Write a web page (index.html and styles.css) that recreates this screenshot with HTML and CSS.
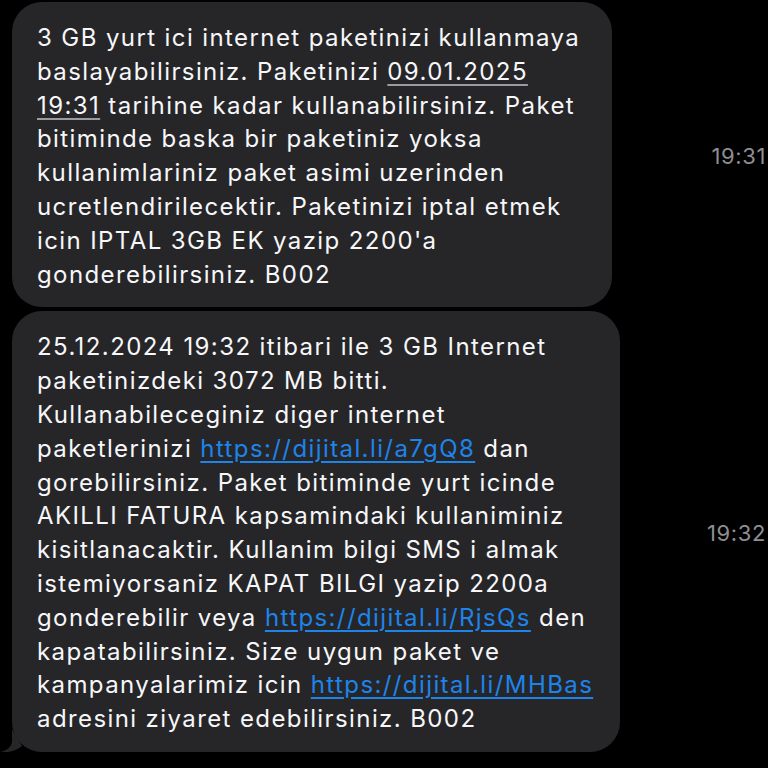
FILE: index.html
```html
<!DOCTYPE html>
<html lang="tr">
<head>
    <meta charset="UTF-8">
    <meta name="viewport" content="width=device-width, initial-scale=1.0">
    <title>Mesajlar</title>
    <link rel="stylesheet" href="styles.css">
</head>
<body>
    <div class="thread">
        <div class="msg">
            <div class="bubble bubble-first">
                3 GB yurt ici internet paketinizi kullanmaya<br>
                baslayabilirsiniz. Paketinizi <span class="date">09.01.2025</span><br>
                <span class="date">19:31</span> tarihine kadar kullanabilirsiniz. Paket<br>
                bitiminde baska bir paketiniz yoksa<br>
                kullanimlariniz paket asimi uzerinden<br>
                ucretlendirilecektir. Paketinizi iptal etmek<br>
                icin IPTAL 3GB EK yazip 2200'a<br>
                gonderebilirsiniz. B002
            </div>
            <span class="time">19:31</span>
        </div>

        <div class="msg">
            <div class="bubble bubble-last">
                25.12.2024 19:32 itibari ile 3 GB Internet<br>
                paketinizdeki 3072 MB bitti.<br>
                Kullanabileceginiz diger internet<br>
                paketlerinizi <a href="#">https://dijital.li/a7gQ8</a> dan<br>
                gorebilirsiniz. Paket bitiminde yurt icinde<br>
                AKILLI FATURA kapsamindaki kullaniminiz<br>
                kisitlanacaktir. Kullanim bilgi SMS i almak<br>
                istemiyorsaniz KAPAT BILGI yazip 2200a<br>
                gonderebilir veya <a href="#">https://dijital.li/RjsQs</a> den<br>
                kapatabilirsiniz. Size uygun paket ve<br>
                kampanyalarimiz icin <a href="#">https://dijital.li/MHBas</a><br>
                adresini ziyaret edebilirsiniz. B002
                <svg class="tail" width="30" height="24" viewBox="0 0 30 24">
                    <path d="M12 0 L12 12 C12 18 6 22 0 23 C8 24 16 22 22 17 Z" fill="#262629"/>
                </svg>
            </div>
            <span class="time">19:32</span>
        </div>
    </div>
</body>
</html>
```

FILE: styles.css
```css
body {
    margin: 0;
    background: #000;
    font-family: Inter, "Noto Sans", sans-serif;
}

.thread {
    display: flex;
    flex-direction: column;
    gap: 4px;
    padding: 2px 0 0 12px;
}

.msg {
    display: flex;
    align-items: center;
    justify-content: space-between;
}

.bubble {
    position: relative;
    flex-shrink: 0;
    box-sizing: border-box;
    padding: 19px 20px 16px 25px;
    background: #262629;
    border-radius: 30px;
    color: #f7f7f9;
    font-size: 24px;
    line-height: 33.8px;
    letter-spacing: 1.4px;
}

.bubble-first {
    width: 600px;
}

.bubble-last {
    width: 608px;
}

.date {
    text-decoration: underline;
    text-decoration-color: #9a9a9f;
    text-underline-offset: 4px;
}

.bubble a {
    color: #1d84ea;
    text-decoration: underline;
    text-underline-offset: 4px;
}

/* little hook under the last bubble */
.tail {
    position: absolute;
    left: -12px;
    bottom: -1px;
}

.time {
    flex-shrink: 0;
    margin: 3px 2px 0 0;
    white-space: nowrap;
    color: #8e8e93;
    font-size: 22px;
    letter-spacing: 0.6px;
}
```
